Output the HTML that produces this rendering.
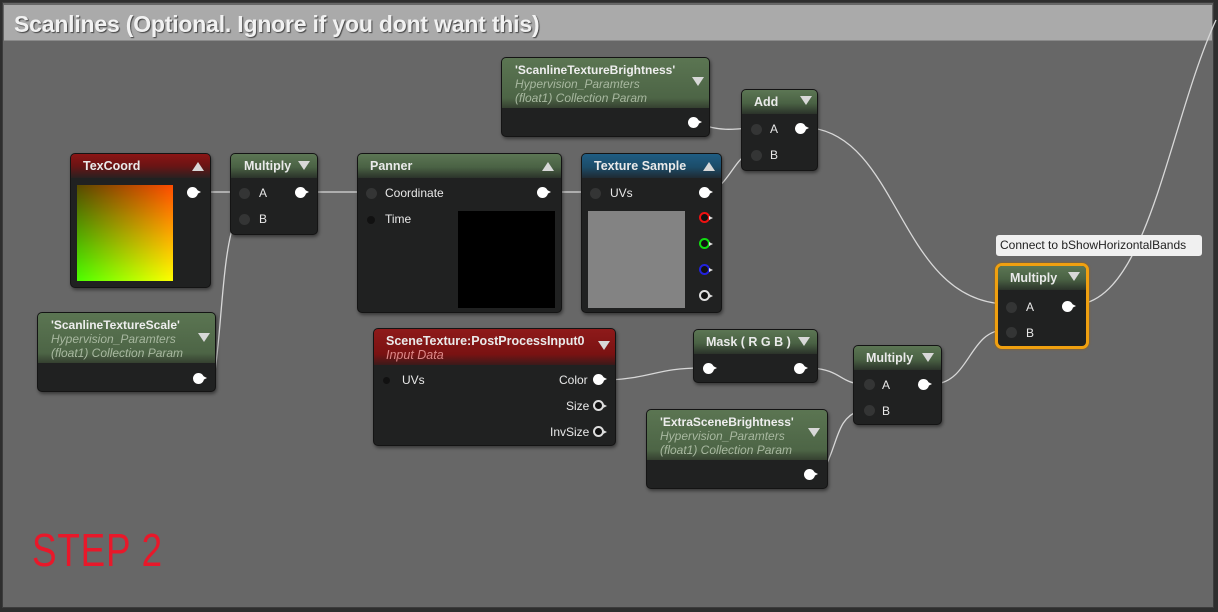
<!DOCTYPE html>
<html><head><meta charset="utf-8"><style>
*{margin:0;padding:0;box-sizing:border-box}
body{width:1218px;height:612px;background:#2e2e2e;position:relative;overflow:hidden;font-family:"Liberation Sans",sans-serif;}
#bg{position:absolute;left:2px;top:2px;width:1212px;height:606px;background:#676767;border:1px solid #3c3c3c}
#title{position:absolute;left:4px;top:5px;width:1208px;height:36px;background:#aaaaaa;border-bottom:1px solid #8a8a8a;color:#f2f2f2;font-weight:bold;font-size:23px;line-height:38px;padding-left:10px;text-shadow:1px 1px 1px #444;letter-spacing:-0.2px}
.n{position:absolute;background:#202121;border-radius:5px;border:1px solid #141414;box-shadow:1px 2px 3px rgba(0,0,0,.45);color:#eee;font-size:12px;overflow:hidden}
.h{position:absolute;left:0;top:0;right:0;height:24px;padding-left:12px;line-height:24px;font-weight:bold;font-size:12.5px;color:#eaeaea}
.g{background:linear-gradient(180deg,#5c7654 0%,#4a6244 55%,#2b332a 100%)}
.r{background:linear-gradient(180deg,#8b1515 0%,#6a1414 50%,#2a2020 100%)}
.b{background:linear-gradient(180deg,#1f5d83 0%,#1c4c69 55%,#1f2a33 100%)}
.tri{position:absolute;width:0;height:0;border-left:6px solid transparent;border-right:6px solid transparent}
.dn{border-top:9px solid #d8d8d8}
.up{border-bottom:9px solid #d8d8d8}
.op{position:absolute;width:11px;height:11px;border-radius:50%;background:#fff}
.op:after{content:"";position:absolute;left:10px;top:3px;border-left:4px solid #fff;border-top:2.5px solid transparent;border-bottom:2.5px solid transparent}
.ring{background:#111;border:2px solid #ddd}
.ring:after{left:8px;top:2px;border-left-color:#ddd}
.ip{position:absolute;width:11px;height:11px;border-radius:50%;background:#343535}
.l{position:absolute;font-size:12px;color:#e8e8e8}
.sub{position:absolute;font-style:italic;font-size:12px;color:#a8b8a0;line-height:14px}
.param{position:absolute;left:0;top:0;right:0;height:50px;background:linear-gradient(180deg,#5b7552,#4d6546 80%,#354030);padding:5px 0 0 13px}
</style></head><body>
<div id="bg"></div>
<div id="title">Scanlines (Optional. Ignore if you dont want this)</div>

<svg style="position:absolute;left:0;top:0" width="1218" height="612">
<g fill="none" stroke="#d8d8d8" stroke-width="1.3">
<path d="M206 192 L236 192"/>
<path d="M214 378 C222 330 222 250 236 218"/>
<path d="M311 192 L363 192"/>
<path d="M553 192 L588 192"/>
<path d="M706 126 C720 130 730 130 748 128"/>
<path d="M712 192 C730 180 735 160 748 154"/>
<path d="M812 128 C900 140 900 300 1005 304"/>
<path d="M1082 304 C1150 290 1170 120 1216 20"/>
<path d="M610 380 C650 378 660 368 700 368"/>
<path d="M812 368 C840 370 840 382 860 384"/>
<path d="M936 384 C970 380 970 330 1005 330"/>
<path d="M822 474 C840 440 835 420 860 410"/>
</g></svg>

<!-- TexCoord -->
<div class="n" style="left:70px;top:153px;width:141px;height:135px">
<div class="h r">TexCoord</div><div class="tri up" style="left:121px;top:8px"></div>
<div style="position:absolute;left:6px;top:31px;width:96px;height:96px;background:linear-gradient(to right,#302800,#ff2a00),linear-gradient(to bottom,#302800,#22ff00);background-blend-mode:screen"></div>
<div class="op" style="left:116px;top:33px"></div>
</div>

<!-- Multiply1 -->
<div class="n" style="left:230px;top:153px;width:88px;height:82px">
<div class="h g" style="padding-left:13px">Multiply</div><div class="tri dn" style="left:67px;top:7px"></div>
<div class="ip" style="left:8px;top:34px"></div><div class="l" style="left:28px;top:32px">A</div>
<div class="op" style="left:64px;top:33px"></div>
<div class="ip" style="left:8px;top:60px"></div><div class="l" style="left:28px;top:58px">B</div>
</div>

<!-- Panner -->
<div class="n" style="left:357px;top:153px;width:205px;height:160px">
<div class="h g">Panner</div><div class="tri up" style="left:184px;top:8px"></div>
<div class="ip" style="left:8px;top:34px"></div><div class="l" style="left:27px;top:32px">Coordinate</div>
<div class="op" style="left:179px;top:33px"></div>
<div class="ip" style="background:#111;width:8px;height:8px;left:9px;top:62px"></div><div class="l" style="left:27px;top:58px">Time</div>
<div style="position:absolute;left:100px;top:57px;width:97px;height:97px;background:#000"></div>
</div>

<!-- Texture Sample -->
<div class="n" style="left:581px;top:153px;width:141px;height:160px">
<div class="h b">Texture Sample</div><div class="tri up" style="left:121px;top:8px"></div>
<div class="ip" style="left:8px;top:34px"></div><div class="l" style="left:28px;top:32px">UVs</div>
<div class="op" style="left:117px;top:33px"></div>
<div style="position:absolute;left:6px;top:57px;width:97px;height:97px;background:#838383"></div>
<div class="op ring" style="left:117px;top:58px;border-color:#e11"></div>
<div class="op ring" style="left:117px;top:84px;border-color:#1d1"></div>
<div class="op ring" style="left:117px;top:110px;border-color:#22d"></div>
<div class="op ring" style="left:117px;top:136px"></div>
</div>

<!-- ScanlineTextureBrightness -->
<div class="n" style="left:501px;top:57px;width:209px;height:80px">
<div class="param"><div style="font-weight:bold;font-size:12px;color:#eee">'ScanlineTextureBrightness'</div></div>
<div class="sub" style="left:13px;top:19px">Hypervision_Paramters<br>(float1) Collection Param</div>
<div class="tri dn" style="left:190px;top:19px"></div>
<div class="op" style="left:186px;top:59px"></div>
</div>

<!-- Add -->
<div class="n" style="left:741px;top:89px;width:77px;height:82px">
<div class="h g">Add</div><div class="tri dn" style="left:58px;top:6px"></div>
<div class="ip" style="left:9px;top:34px"></div><div class="l" style="left:28px;top:32px">A</div>
<div class="op" style="left:53px;top:33px"></div>
<div class="ip" style="left:9px;top:60px"></div><div class="l" style="left:28px;top:58px">B</div>
</div>

<!-- ScanlineTextureScale -->
<div class="n" style="left:37px;top:312px;width:179px;height:80px">
<div class="param"><div style="font-weight:bold;font-size:12px;color:#eee">'ScanlineTextureScale'</div></div>
<div class="sub" style="left:13px;top:19px">Hypervision_Paramters<br>(float1) Collection Param</div>
<div class="tri dn" style="left:160px;top:20px"></div>
<div class="op" style="left:155px;top:60px"></div>
</div>

<!-- SceneTexture -->
<div class="n" style="left:373px;top:328px;width:243px;height:118px">
<div class="h r" style="height:36px;background:linear-gradient(180deg,#8e1a1a,#7a1212 70%,#3a1a1a)"><div style="line-height:14px;padding-top:5px">SceneTexture:PostProcessInput0</div><div style="font-weight:normal;font-style:italic;color:#d88;line-height:14px">Input Data</div></div>
<div class="tri dn" style="left:224px;top:12px"></div>
<div class="ip" style="left:9px;top:48px;width:7px;height:7px;background:#111"></div><div class="l" style="left:28px;top:44px">UVs</div>
<div class="l" style="left:185px;top:44px">Color</div><div class="op" style="left:219px;top:45px"></div>
<div class="l" style="left:192px;top:70px">Size</div><div class="op ring" style="left:219px;top:71px"></div>
<div class="l" style="left:176px;top:96px">InvSize</div><div class="op ring" style="left:219px;top:97px"></div>
</div>

<!-- Mask -->
<div class="n" style="left:693px;top:329px;width:125px;height:54px">
<div class="h g">Mask ( R G B )</div><div class="tri dn" style="left:104px;top:7px"></div>
<div class="op" style="left:9px;top:33px"></div>
<div class="op" style="left:100px;top:33px"></div>
</div>

<!-- Multiply2 -->
<div class="n" style="left:853px;top:345px;width:89px;height:80px">
<div class="h g">Multiply</div><div class="tri dn" style="left:68px;top:7px"></div>
<div class="ip" style="left:10px;top:33px"></div><div class="l" style="left:28px;top:32px">A</div>
<div class="op" style="left:64px;top:33px"></div>
<div class="ip" style="left:10px;top:59px"></div><div class="l" style="left:28px;top:58px">B</div>
</div>

<!-- ExtraSceneBrightness -->
<div class="n" style="left:646px;top:409px;width:182px;height:80px">
<div class="param"><div style="font-weight:bold;font-size:12px;color:#eee">'ExtraSceneBrightness'</div></div>
<div class="sub" style="left:13px;top:19px">Hypervision_Paramters<br>(float1) Collection Param</div>
<div class="tri dn" style="left:161px;top:18px"></div>
<div class="op" style="left:157px;top:59px"></div>
</div>

<!-- Tooltip -->
<div style="position:absolute;left:996px;top:235px;width:206px;height:21px;background:#f0f0f0;border-radius:3px;font-size:12px;color:#222;line-height:21px;padding-left:4px">Connect to bShowHorizontalBands</div>

<!-- Multiply3 selected -->
<div class="n" style="left:995px;top:263px;width:94px;height:86px;border:3px solid #f0a010;border-radius:7px;box-shadow:0 0 2px #a06000">
<div class="h g">Multiply</div><div class="tri dn" style="left:70px;top:6px"></div>
<div class="ip" style="left:8px;top:36px"></div><div class="l" style="left:28px;top:34px">A</div>
<div class="op" style="left:64px;top:35px"></div>
<div class="ip" style="left:8px;top:61px"></div><div class="l" style="left:28px;top:60px">B</div>
</div>

<div style="position:absolute;left:32px;top:524px;color:#e8182a;font-size:46px;line-height:52px;font-family:'Liberation Sans',sans-serif;letter-spacing:1px;transform:scaleX(0.8);transform-origin:left;white-space:nowrap">STEP 2</div>
</body></html>
